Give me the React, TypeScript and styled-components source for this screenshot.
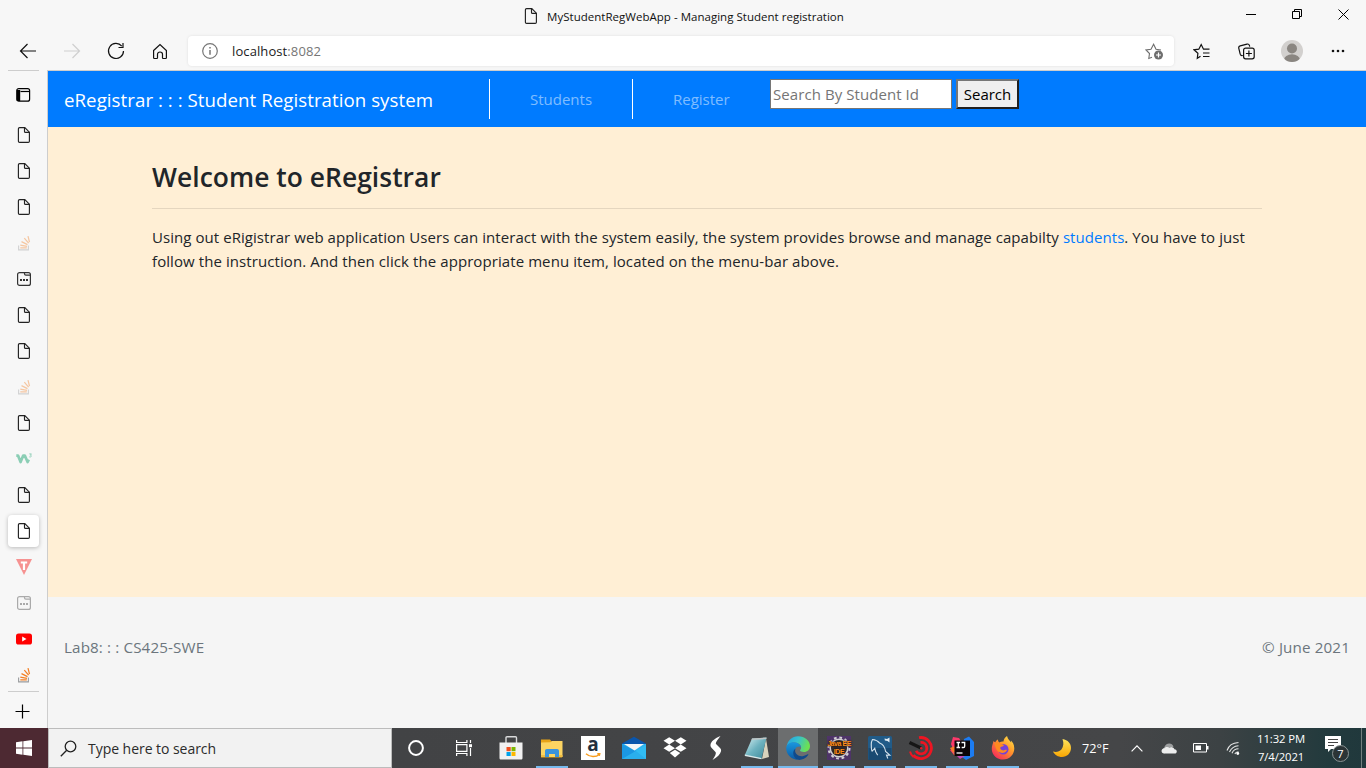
import React from "react";
import styled, { createGlobalStyle, css } from "styled-components";

const GlobalStyle = createGlobalStyle`
  *, *::before, *::after { box-sizing: border-box; }
  html, body { margin: 0; padding: 0; }
  body { font-family: "Open Sans", "Noto Sans", sans-serif; overflow: hidden; }
  svg { display: block; flex: none; }
`;

const Screen = styled.div`
  width: 1366px;
  height: 768px;
  display: flex;
  flex-direction: column;
  background: #f7f7f7;
`;

/* ---------- browser frame ---------- */
const TitleBar = styled.div`
  height: 34px;
  display: grid;
  grid-template-columns: 1fr auto 1fr;
  align-items: start;
`;
const WindowTitle = styled.div`
  grid-column: 2;
  display: flex;
  align-items: center;
  gap: 8px;
  height: 32px;
  padding-left: 1px;
  font-size: 11.5px;
  letter-spacing: 0.02px;
  color: #111;
`;
const WindowButtons = styled.div`
  display: flex;
  justify-content: flex-end;
  height: 28px;
`;
const WindowButton = styled.div`
  width: 46px;
  display: grid;
  place-items: center;
`;
const AddressRow = styled.div`
  height: 36px;
  display: flex;
  align-items: center;
  padding-bottom: 2px;
`;
const NavButton = styled.div<{ $w?: number }>`
  width: ${(p) => p.$w ?? 44}px;
  height: 32px;
  flex: none;
  display: grid;
  place-items: center;
`;
const NavGroup = styled.div<{ $left: number; $width: number }>`
  display: flex;
  width: ${(p) => p.$width}px;
  padding-left: ${(p) => p.$left}px;
`;
const AddressBox = styled.div`
  width: 986px;
  height: 30px;
  display: flex;
  align-items: center;
  padding: 0 10px 0 14px;
  background: #fff;
  border-radius: 4px;
  box-shadow: 0 0 3px rgba(0, 0, 0, 0.1);
`;
const Url = styled.div`
  flex: 1;
  margin-left: 14px;
  font-size: 13px;
  letter-spacing: 0.1px;
  color: #1b1b1b;
`;
const Port = styled.span`
  color: #767676;
`;

const Middle = styled.div`
  height: 658px;
  display: flex;
`;
const Sidebar = styled.div`
  width: 48px;
  height: 658px;
  display: flex;
  flex-direction: column;
  padding-left: 8px;
  border-right: 1px solid #cdcdcd;
  background: #f7f7f7;
`;
const SideRule = styled.div`
  width: 31px;
  height: 1px;
  background: #cdcdcd;
`;
const SideHeader = styled.div`
  height: 46px;
  display: flex;
  align-items: center;
  padding: 2px 0 0 8px;
`;
const TabList = styled.div`
  height: 574px;
  display: flex;
  flex-direction: column;
  gap: 4px;
  padding-top: 2px;
`;
const TabSlot = styled.div<{ $active?: boolean; $faded?: boolean }>`
  width: 31px;
  height: 32px;
  flex: none;
  display: flex;
  align-items: center;
  padding-left: 8px;
  border-radius: 4px;
  svg { opacity: ${(p) => (p.$faded ? 0.4 : 1)}; }
  ${(p) =>
    p.$active &&
    css`
      background: #fff;
      box-shadow: 0 1px 4px rgba(0, 0, 0, 0.25);
    `}
`;
const NewTab = styled.div`
  flex: 1;
  display: flex;
  align-items: center;
  padding: 3px 0 0 7px;
`;

/* ---------- page ---------- */
const Page = styled.div`
  flex: 1;
  display: flex;
  flex-direction: column;
  border-top: 1px solid #cdcdcd;
`;
const Navbar = styled.nav`
  height: 56px;
  display: flex;
  padding: 8px 16px;
  background: #007bff;
`;
const Brand = styled.div`
  width: 425px;
  line-height: 42px;
  font-size: 18.7px;
  letter-spacing: 0.045px;
  color: #fff;
  white-space: nowrap;
`;
const NavItem = styled.a<{ $w: number }>`
  width: ${(p) => p.$w}px;
  height: 40px;
  padding-left: 40px;
  border-left: 1px solid #fff;
  line-height: 40px;
  font-size: 15px;
  color: rgba(255, 255, 255, 0.5);
`;
const SearchForm = styled.div`
  display: flex;
  gap: 4px;
`;
const SearchInput = styled.input`
  width: 182px;
  height: 30px;
  padding: 1px 2px;
  border: 1px solid #767676;
  background: #fff;
  font: 15px "Open Sans", "Noto Sans", sans-serif;
  letter-spacing: 0.07px;
  outline: 0;
  &::placeholder { color: #757575; opacity: 1; }
`;
const SearchButton = styled.button`
  width: 63px;
  height: 30px;
  padding: 0;
  border: 2px solid;
  border-color: #767676 #212121 #212121 #767676;
  background: #efefef;
  font: 15px "Open Sans", "Noto Sans", sans-serif;
  color: #000;
`;
const Content = styled.main`
  height: 470px;
  padding: 32px 104px 0;
  background: #ffefd5;
`;
const Heading = styled.h3`
  margin: 0;
  line-height: 36px;
  font-size: 26.4px;
  font-weight: 600;
  letter-spacing: 0.04px;
  color: #212529;
`;
const Rule = styled.div`
  height: 1px;
  margin: 13px 0 16px;
  background: rgba(0, 0, 0, 0.1);
`;
const Paragraph = styled.p`
  margin: 0;
  line-height: 24px;
  font-size: 15px;
  color: #212529;
  white-space: nowrap;
`;
const Line = styled.span<{ $track: number }>`
  display: block;
  letter-spacing: ${(p) => p.$track}px;
`;
const Link = styled.a`
  color: #007bff;
`;
const Footer = styled.footer`
  flex: 1;
  display: flex;
  justify-content: space-between;
  padding: 38px 16px 0;
  line-height: 24px;
  font-size: 15.2px;
  letter-spacing: 0.13px;
  background: #f5f5f5;
  color: #6c757d;
`;

/* ---------- taskbar ---------- */
const Taskbar = styled.div`
  height: 40px;
  display: flex;
  background: linear-gradient(90deg, #4d2932 0, #4d2932 48px, #424345 392px, #454648 1120px, #3c4244 1220px, #223a3d 1330px, #20383c 1366px);
  color: #fff;
`;
const TaskCell = styled.div<{ $w: number }>`
  width: ${(p) => p.$w}px;
  flex: none;
  display: grid;
  place-items: center;
`;
const SearchBox = styled.div`
  width: 344px;
  display: flex;
  align-items: center;
  gap: 11px;
  padding-left: 11px;
  border: 1px solid #bcbcbc;
  background: #f2f2f2;
  font-size: 14px;
  letter-spacing: -0.04px;
  color: #2b2b2b;
`;
const Apps = styled.div`
  display: flex;
  gap: 1px;
  margin-left: 4px;
  width: 552px;
`;
const AppCell = styled.div<{ $open?: boolean; $active?: boolean }>`
  width: 40px;
  flex: none;
  display: flex;
  flex-direction: column;
  align-items: center;
  justify-content: space-between;
  padding-top: 8px;
  background: ${(p) => (p.$active ? "#6c6e6f" : "transparent")};
  &::after {
    content: "";
    width: ${(p) => (p.$active ? 40 : 32)}px;
    height: 2px;
    background: ${(p) => (p.$open || p.$active ? "#76b9ed" : "transparent")};
  }
`;
const Tray = styled.div`
  flex: 1;
  display: flex;
  align-items: center;
  padding-left: 9px;
`;
const Temp = styled.div`
  width: 39px;
  margin-left: 10px;
  font-size: 12.7px;
`;
const Clock = styled.div`
  width: 64px;
  display: flex;
  flex-direction: column;
  align-items: center;
  line-height: 18px;
  font-size: 11.3px;
  letter-spacing: -0.1px;
  padding-bottom: 1px;
`;
const ShowDesktop = styled.div`
  width: 5px;
  height: 40px;
  margin-left: auto;
  border-left: 1px solid #71807f;
`;

/* ---------- icons ---------- */
const Doc = () => (
  <svg width="16" height="16" viewBox="0 0 16 16" fill="none" stroke="#222" strokeWidth="1.15">
    <path d="M3.600.6h5.200l4.600 4.600v9c0 .7-.5 1.200-1.200 1.200H3.600c-.7 0-1.200-.5-1.200-1.200V1.800C2.400 1.100 2.900.6 3.600.6z" />
    <path d="M8.500.8v3.600c0 .6.400 1 1 1h3.700" />
  </svg>
);
const Stack = () => (
  <svg width="16" height="16" viewBox="0 0 16 16" fill="none">
    <path d="M2.600 10.500v4.400h9.800v-4.400" stroke="#9a9c9e" strokeWidth="1.100" />
    <path d="M4.300 12.900h6.500M4.300 10.100l6.700 1.300M5.500 6.600l6 3M8.300 3.200l4.300 5M12 1.200l1.500 6" stroke="#f48024" strokeWidth="1.250" />
  </svg>
);
const Dots = ({ color = "#333" }: { color?: string }) => (
  <svg width="16" height="16" viewBox="0 0 16 16" fill="none" stroke={color} strokeWidth="1.200">
    <rect x="1.600" y="1.600" width="12.800" height="12.800" rx="2" />
    <path d="M8.500 1.700v1.100c0 .8.600 1.400 1.400 1.400h4.600" />
    <path d="M4 9h2M7 9h2M10 9h2" strokeWidth="2" />
  </svg>
);
const W3 = () => (
  <svg width="16" height="16" viewBox="0 0 16 16" fill="none" stroke="#8bceb5">
    <path d="M.3 4.600H2L4.600 11 7.200 4.600h1.600L11.600 11l1.200-2.400" strokeWidth="2.700" strokeLinejoin="round" />
    <path d="M13.300 2.900h2.100l-1 1.300c1.500 0 1.400 2.300-1.100 1.700" strokeWidth=".9" />
  </svg>
);
const TIcon = () => (
  <svg width="16" height="16" viewBox="0 0 16 16">
    <path d="M0 0h16L8 16z" fill="#f69291" />
    <path d="M4.800 2.500h6.400v2H9.100V11H6.900V4.500H4.800z" fill="#fff" />
  </svg>
);
const YouTube = () => (
  <svg width="16" height="16" viewBox="0 0 16 16">
    <rect y="2.400" width="16" height="11.200" rx="2.600" fill="#f00" />
    <path d="M6.200 5.600v4.800L10.500 8z" fill="#fff" />
  </svg>
);

const sideTabs: { icon: React.ReactNode; active?: boolean; faded?: boolean }[] = [
  { icon: <Doc /> },
  { icon: <Doc /> },
  { icon: <Doc /> },
  { icon: <Stack />, faded: true },
  { icon: <Dots /> },
  { icon: <Doc /> },
  { icon: <Doc /> },
  { icon: <Stack />, faded: true },
  { icon: <Doc /> },
  { icon: <W3 /> },
  { icon: <Doc /> },
  { icon: <Doc />, active: true },
  { icon: <TIcon /> },
  { icon: <Dots color="#aaa" /> },
  { icon: <YouTube /> },
  { icon: <Stack /> },
];

const Store = () => (
  <svg width="24" height="24" viewBox="0 0 24 24">
    <path d="M7 8V1.800c0-.6.400-1 1-1h8.500c.6 0 1 .4 1 1V8" fill="none" stroke="#d9dadb" strokeWidth="1.400" />
    <path d="M.5 6.500h23V22c0 1-.6 1.600-1.500 1.600H2C1 23.600.5 23 .5 22z" fill="#f1f1f1" />
    <path d="M7.500 11h4.200v4.200H7.500z" fill="#f04e1f" /><path d="M12.500 11h4v4.200h-4z" fill="#7db700" />
    <path d="M7.500 16h4.200v4H7.500z" fill="#00a2ea" /><path d="M12.500 16h4v4h-4z" fill="#fdb800" />
  </svg>
);
const Explorer = () => (
  <svg width="24" height="24" viewBox="0 0 24 24">
    <path d="M1 3.500h9l1.500 2H22v16H1z" fill="#e8a317" />
    <path d="M1 6.500l9.500-.2L12 5h10.500v16H1z" fill="#fcd462" />
    <path d="M5 21v-6c0-1.300.7-2 2-2h10c1.300 0 2 .7 2 2v6h-4v-3H9v3z" fill="#3a93dd" />
    <path d="M1 19h4v2H1zm18 0h3.500v2H19z" fill="#f2bd42" />
  </svg>
);
const AmazonGlyph = styled.div`
  width: 24px;
  height: 24px;
  display: flex;
  flex-direction: column;
  align-items: center;
  background: #fff;
  color: #222f3e;
  font: bold 19px/17px "Open Sans", sans-serif;
`;
const Mail = () => (
  <svg width="24" height="24" viewBox="0 0 24 24">
    <path d="M0 7.500 12 .8 24 7.500V10H0z" fill="#0a56ad" />
    <path d="M0 8h24v15H0z" fill="#2cb4f0" />
    <path d="M0 8 14 15 24 23H0z" fill="#1b97e2" />
    <path d="M2 8h20l-9.500 6.500z" fill="#f4f5f7" />
    <path d="M24 9 0 23h24z" fill="#37c3f5" opacity=".55" />
  </svg>
);
const Dropbox = () => (
  <svg width="24" height="24" viewBox="0 0 24 24" fill="#fff">
    <path d="M6.200 1.200 12 4.800 6.200 8.400.5 4.800zM17.800 1.200l5.700 3.600-5.700 3.600L12 4.800zM6.200 8.600 12 12.200l-5.800 3.600L.5 12.200zM17.800 8.600l5.700 3.600-5.700 3.600L12 12.200zM12 13.800l5.200 3.300L12 21.400l-5.200-4.300z" />
  </svg>
);
const Bolt = () => (
  <svg width="24" height="24" viewBox="0 0 24 24" fill="#fff">
    <path d="M16.500 0C10 2.800 7 5.500 6.500 8.800c-.2 1.200.3 2.200 1.200 3.200l4 4.300c.6 2-.8 4.200-3.200 7.700 5-3 7.700-5.600 8.500-8.800.3-1.300 0-2.300-1-3.300l-4.200-4.200C11.700 5.800 13.800 3.500 16.500 0z" />
  </svg>
);
const Notepad = () => (
  <svg width="26" height="24" viewBox="0 0 26 24">
    <defs><linearGradient id="np" x1="0" y1="0" x2="1" y2="1"><stop offset="0" stopColor="#d8f0f2" /><stop offset=".5" stopColor="#6db2bf" /><stop offset="1" stopColor="#3b8798" /></linearGradient></defs>
    <path d="M22 2.500l3 18.500-7 2z" fill="#d9d3bd" />
    <path d="M8 2.500 22.500 1.500 17.500 23 .8 19z" fill="url(#np)" />
    <path d="M8 2.500l14.500-1v1.500L7.500 4z" fill="#c0c4c5" />
    <path d="M.8 18.500 17.500 22v1.300L.8 20z" fill="#dbe9ea" />
  </svg>
);
const Edge = () => (
  <svg width="24" height="24" viewBox="0 0 24 24">
    <defs>
      <linearGradient id="e1" x1="0" y1="0" x2="1" y2=".3"><stop offset="0" stopColor="#249fdc" /><stop offset=".5" stopColor="#35c1d0" /><stop offset="1" stopColor="#6be054" /></linearGradient>
      <linearGradient id="e2" x1="0" y1="0" x2="0" y2="1"><stop offset="0" stopColor="#1a98df" /><stop offset="1" stopColor="#0c59a4" /></linearGradient>
    </defs>
    <path d="M.5 11C1.500 4.500 6 .2 12 .2c7 0 12 4.600 12 9.800 0 3.700-2.700 6-6 6-2.500 0-4-.8-4-1.700 0-.7 1.100-1 1.100-2.900C15 8 10 6 6 6.800 3 7.400 1 9 .5 11z" fill="url(#e1)" />
    <path d="M.2 12C.4 8.500 4 5.800 8 6.200c4 .4 6.600 2.600 7 5-1-1.200-4.500-1-5.600 1.600C7.600 17 11 23.800 12 23.800 5.500 23.800 0 18.500.2 12z" fill="url(#e2)" />
    <path d="M9.400 12.800c-1.500 4.700 3 8.200 7.200 7.400 2-.3 4-1.400 5-1.900.6-.3 1 .2.600.8C19.500 23 15 24.300 12 23.800 6.500 21.800 6 15 9.400 12.800z" fill="#114a8b" />
  </svg>
);
const EclipseTile = styled.div`
  width: 24px;
  height: 24px;
  display: grid;
  grid-template-columns: 24px;
  background: #4e3468;
  svg, div { grid-area: 1 / 1; }
`;
const EclipseLabel = styled.div`
  z-index: 1;
  display: flex;
  flex-direction: column;
  align-items: center;
  padding-top: 4px;
  font: bold 7px/8px "Liberation Sans", sans-serif;
  letter-spacing: -0.45px;
  color: #ff8f1f;
  text-shadow: 0 0 1px #2a1509, 0 0 1px #2a1509, 0 0 2px #2a1509;
  white-space: nowrap;
`;
const Gear = () => (
  <svg width="24" height="24" viewBox="0 0 24 24">
    <circle cx="12" cy="12" r="8.800" fill="#322b2f" stroke="#d3d1d4" strokeWidth="1.500" />
    <circle cx="12" cy="12" r="10.500" fill="none" stroke="#d3d1d4" strokeWidth="2" strokeDasharray="2.750 2.750" />
  </svg>
);
const MySql = () => (
  <svg width="24" height="24" viewBox="0 0 24 24">
    <rect width="24" height="24" rx="1.500" fill="#215b88" />
    <path d="M.5 12h23v12H.5z" fill="#194a72" />
    <path d="M4 15.500C2.800 10 3 6 4.500 3.500c3 .2 5.500 1.600 7.500 3.800 3.500 1 5 5.200 5.600 8.200l4.200 3.700-3.300-.2 1.300 3.500M4 15.500l2.700-3.300c.4 2.600 1.400 5 3 7" fill="none" stroke="#d5e2ec" strokeWidth="1.100" />
    <path d="M16.500 2.500 19 3l2.500-1.500v5L19.500 5l-2.600-.6z" fill="#e2ecf3" />
  </svg>
);
const Radar = () => (
  <svg width="26" height="24" viewBox="0 0 26 24" fill="none" stroke="#ee1522" strokeWidth="2.800">
    <path d="M11 1.700A10.500 10.500 0 1 1 5.200 19.200" />
    <path d="M12.500 6.500a5.700 5.700 0 1 1-4.400 8.400" />
    <path d="M1.500 6.500 13 12" stroke="#161616" strokeWidth="3.200" />
    <circle cx="13.200" cy="12.200" r="1.200" fill="#ee1522" stroke="none" />
    <path d="M2 15.500c.6 2.500 1.800 4.200 3.500 5.500" strokeWidth="2" />
  </svg>
);
const IntelliJ = () => (
  <svg width="24" height="24" viewBox="0 0 24 24">
    <path d="M1 8 3 1l6 1 3 5-8 12-4-5 3-1z" fill="#fc3a6b" />
    <path d="M0 12l5-2v10z" fill="#f97b2b" />
    <path d="M14 3l5-2.500L24 6v14l-8 4-4-3z" fill="#1c7cf2" />
    <path d="M3 16l7 7 5-3z" fill="#c744b4" />
    <path d="M4.500 4.500h15.500v15.500H4.500z" fill="#0b0508" />
    <path d="M6.500 6.500h3.600M8.300 6.500v5M6.500 11.500h3.600M11.500 6.500h3.200v3.700c0 .9-.4 1.300-1.300 1.300h-1.700" fill="none" stroke="#fff" strokeWidth="1.300" />
    <path d="M6.500 17h6" stroke="#fff" strokeWidth="1.300" />
  </svg>
);
const Firefox = () => (
  <svg width="24" height="24" viewBox="0 0 24 24">
    <defs><linearGradient id="ff" x1="1" y1="0" x2=".2" y2="1"><stop offset="0" stopColor="#fff04f" /><stop offset=".45" stopColor="#ff9a2a" /><stop offset="1" stopColor="#f5265c" /></linearGradient></defs>
    <path d="M2.500 5C2 8 .6 10 .8 13.500 1.200 19.500 6 23.600 12 23.600c6.500 0 11.200-4.800 11.300-11 0-4.300-2-6.800-3.400-8l.3 2C18.500 4 17 3.500 16 0c-2.300 1.500-3.300 3.600-3.500 5.500-2 0-3 .3-4 .9C7 6 7 4.500 7 3.600 5.500 4.200 4.800 5.300 4.300 6.200 3.500 6 3 5.600 2.500 5z" fill="url(#ff)" />
    <circle cx="12.300" cy="13.200" r="5.200" fill="#7542d8" />
    <path d="M3.500 7.500c2.500-1.500 4.500-.8 5.500 0l4 1.600c-.5 1.500-2.700 1.500-3.500 2.200-.7 1 .2 2.600 2 3 1.800.5 3-1 4.500-.4-1 2.600-5 4-8 2.200C5 14.500 4.500 11 3.500 7.500z" fill="#ff8a1f" />
  </svg>
);

const apps: { icon: React.ReactNode; open?: boolean; active?: boolean }[] = [
  { icon: <Store /> },
  { icon: <Explorer />, open: true },
  {
    icon: (
      <AmazonGlyph>
        a
        <svg width="16" height="5" viewBox="0 0 16 5" fill="none" stroke="#f79c1d" strokeWidth="1.400"><path d="M1 .8c4 3.600 10 3.600 13.500.4M12.300.8l2.500-.2-.5 2.300" /></svg>
      </AmazonGlyph>
    ),
  },
  { icon: <Mail /> },
  { icon: <Dropbox /> },
  { icon: <Bolt /> },
  { icon: <Notepad />, open: true },
  { icon: <Edge />, active: true },
  {
    icon: (
      <EclipseTile>
        <Gear />
        <EclipseLabel><span>Java EE</span><span>IDE</span></EclipseLabel>
      </EclipseTile>
    ),
    open: true,
  },
  { icon: <MySql />, open: true },
  { icon: <Radar />, open: true },
  { icon: <IntelliJ />, open: true },
  { icon: <Firefox />, open: true },
];

const Notice = styled.div`
  position: relative;
  width: 24px;
  height: 24px;
  margin-left: 12px;
`;
const Badge = styled.div`
  position: absolute;
  left: 7px;
  top: 9px;
  width: 17px;
  height: 17px;
  border: 1px solid #8b9495;
  border-radius: 50%;
  background: #2b3436;
  text-align: center;
  font-size: 11px;
  line-height: 15px;
`;

function BrowserTop() {
  return (
    <>
      <TitleBar>
        <WindowTitle>
          <Doc />
          MyStudentRegWebApp - Managing Student registration
        </WindowTitle>
        <WindowButtons>
          <WindowButton><svg width="10" height="10"><path d="M0 5.500h10" stroke="#000" /></svg></WindowButton>
          <WindowButton><svg width="10" height="10" fill="none" stroke="#000"><path d="M.5 2.500h7v7h-7zM2.500 2.500v-2h7v7h-2" /></svg></WindowButton>
          <WindowButton><svg width="11" height="11" stroke="#000"><path d="M.5.5l10 10M10.500.5l-10 10" /></svg></WindowButton>
        </WindowButtons>
      </TitleBar>
      <AddressRow>
        <NavGroup $left={6} $width={188}>
          <NavButton><svg width="18" height="16" fill="none" stroke="#111" strokeWidth="1.200"><path d="M17 8H1.500M8.500 1l-7 7 7 7" /></svg></NavButton>
          <NavButton><svg width="18" height="16" fill="none" stroke="#cfcfcf" strokeWidth="1.200"><path d="M1 8h15.500M9.500 1l7 7-7 7" /></svg></NavButton>
          <NavButton><svg width="18" height="18" fill="none" stroke="#111" strokeWidth="1.200"><path d="M14.800 4.200A7.500 7.500 0 1 0 16.500 9M16 1v4.500h-4.500" /></svg></NavButton>
          <NavButton><svg width="16" height="17" fill="none" stroke="#111" strokeWidth="1.200"><path d="M1.600 7.500 8 1.500l6.400 6v7.200c0 .5-.3.800-.8.800h-2.400c-.4 0-.7-.3-.7-.8v-3.500c0-1.300-1-2.200-2.500-2.200s-2.500.9-2.500 2.200v3.500c0 .5-.3.800-.7.800H2.400c-.5 0-.8-.3-.8-.8z" /></svg></NavButton>
        </NavGroup>
        <AddressBox>
          <svg width="16" height="16" fill="none" stroke="#767676" strokeWidth="1.200"><circle cx="8" cy="8" r="7.300" /><path d="M8 7v4.800M8 4v1.500" strokeWidth="1.500" /></svg>
          <Url>localhost<Port>:8082</Port></Url>
          <svg width="19" height="18" viewBox="0 0 19 18">
            <path d="M7 15.200 3.800 16.500l.7-5L1 8l5-.8L8.600 2.300 11 7.200l5 .8" fill="none" stroke="#6e6e6e" strokeWidth="1.100" />
            <circle cx="13.500" cy="13" r="4.500" fill="#6e6e6e" />
            <path d="M11 13h5M13.500 10.500v5" stroke="#fff" strokeWidth="1.200" />
          </svg>
        </AddressBox>
        <NavGroup $left={6} $width={192}>
          <NavButton>
            <svg width="18" height="17" viewBox="0 0 18 17" fill="none" stroke="#111" strokeWidth="1.200"><path d="M7.500 13.200 4.300 15.300l.6-5L1 6.800l4.800-.6 2.400-4.700 2.300 4.700h6M10 10h6.500M10 13.500h6.500" /></svg>
          </NavButton>
          <NavButton>
            <svg width="17" height="17" viewBox="0 0 17 17" fill="none" stroke="#111" strokeWidth="1.200"><path d="M4.800 12.500c-1.700.4-2.300-.3-2.600-1.300L.8 5.300C.5 4 1 3.200 2.200 2.900L9 1.100c1.200-.3 2 .1 2.400 1.300l.3 1.200" /><rect x="5.600" y="5.200" width="10.600" height="10.600" rx="2" /><path d="M10.900 7.500v6M7.900 10.500h6" /></svg>
          </NavButton>
          <NavButton $w={48}>
            <svg width="22" height="22"><defs><clipPath id="av"><circle cx="11" cy="11" r="11" /></clipPath></defs><g clipPath="url(#av)"><path d="M0 0h22v22H0z" fill="#d2d0ce" /><circle cx="11" cy="8.500" r="5" fill="#8a8681" /><ellipse cx="11" cy="20" rx="8" ry="5.700" fill="#8a8681" /></g></svg>
          </NavButton>
          <NavButton><svg width="14" height="4" fill="#111"><circle cx="2" cy="2" r="1.300" /><circle cx="7" cy="2" r="1.300" /><circle cx="12" cy="2" r="1.300" /></svg></NavButton>
        </NavGroup>
      </AddressRow>
    </>
  );
}

function SideTabs() {
  return (
    <Sidebar>
      <SideRule />
      <SideHeader>
        <svg width="16" height="16" viewBox="0 0 16 16" fill="none" stroke="#000" strokeWidth="1.200"><rect x=".8" y="1.600" width="12.800" height="12.600" rx="2" /><path d="M4.500 4.500h9" /><path d="M.8 3h3.400v11H.8z" fill="#000" stroke="none" /></svg>
      </SideHeader>
      <TabList>
        {sideTabs.map((t, i) => (
          <TabSlot key={i} $active={t.active} $faded={t.faded}>{t.icon}</TabSlot>
        ))}
      </TabList>
      <SideRule />
      <NewTab><svg width="15" height="15" stroke="#000" strokeWidth="1.200"><path d="M7.500.5v14M.5 7.500h14" /></svg></NewTab>
    </Sidebar>
  );
}

function WindowsTaskbar() {
  return (
    <Taskbar>
      <TaskCell $w={48}>
        <svg width="16" height="16" fill="#fff"><path d="M0 2.200 6.500 1.300v6.200H0zM7.300 1.200 16 0v7.500H7.300zM0 8.400h6.500v6.300L0 13.800zM7.300 8.400H16V16l-8.700-1.200z" /></svg>
      </TaskCell>
      <SearchBox>
        <svg width="17" height="17" fill="none" stroke="#222" strokeWidth="1.300"><circle cx="10.500" cy="6.500" r="5.300" /><path d="M6.700 10.300.8 16.200" /></svg>
        Type here to search
      </SearchBox>
      <TaskCell $w={48}><svg width="16" height="16" fill="none" stroke="#fff" strokeWidth="2"><circle cx="8" cy="8" r="6.900" /></svg></TaskCell>
      <TaskCell $w={47}><svg width="16" height="16" fill="none" stroke="#fff" strokeWidth="1.200"><path d="M.6 0v2.500h10.300V0M.6 16v-2.500h10.300V16M.6 4.700h10.300v6.600H.6zM14.500 0v3M14.500 8v8" /><path d="M13 4.200h3v3h-3z" fill="#fff" stroke="none" /></svg></TaskCell>
      <Apps>
        {apps.map((a, i) => (
          <AppCell key={i} $open={a.open} $active={a.active}>{a.icon}</AppCell>
        ))}
      </Apps>
      <Tray>
        <svg width="20" height="20" viewBox="0 0 20 20"><defs><linearGradient id="mn" x1="0" y1="0" x2="0" y2="1"><stop offset="0" stopColor="#ffe45c" /><stop offset="1" stopColor="#f9a602" /></linearGradient></defs><path d="M10.500 1C16 2 19 5.500 19 10c0 5-4 9-9 9-4 0-7.300-2.200-9-5.500 3 1 6.300.3 8.400-2C11.500 9 12 5 10.500 1z" fill="url(#mn)" /></svg>
        <Temp>72°F</Temp>
        <TaskCell $w={32}><svg width="12" height="7" fill="none" stroke="#fff" strokeWidth="1.200"><path d="M.6 6.300 6 .9l5.400 5.400" /></svg></TaskCell>
        <TaskCell $w={32}><svg width="16" height="11"><path d="M3 10.500a3 3 0 0 1 0-5.500C4 2 6 .6 8.300.6c2 0 3.400 1 4.200 3L6 9z" fill="#9c9e9f" /><path d="M3.300 10.500c-3.700-.3-3.700-4.800.2-5.200 1-1.500 3.700-1.600 5-.2 1.300-1.700 4.600-1 4.900 1.200 3.300.2 3 4.200.2 4.200z" fill="#eceded" /></svg></TaskCell>
        <TaskCell $w={32}><svg width="16" height="10"><path d="M.5.500h13v8.500H.5z" fill="none" stroke="#fff" /><path d="M2.500 2.500h5.500v4.500H2.500zM14 3h1.500v3.500H14z" fill="#fff" /></svg></TaskCell>
        <TaskCell $w={32}><svg width="14" height="14" fill="none" stroke="#e5e6e6" strokeWidth="1.100"><path d="M1 9.500C2.500 5 6.500 1.800 12.500 1.500M3.500 11C5 7.500 8 5 12.500 4.700M6 12.200c1-2.400 3.300-4.300 6.500-4.400M8.800 13c.6-1.300 1.800-2.200 3.700-2.300" /><circle cx="11.800" cy="12.500" r="1.400" fill="#fff" stroke="none" /></svg></TaskCell>
        <Clock><span>11:32 PM</span><span>7/4/2021</span></Clock>
        <Notice>
          <svg width="17" height="17"><path d="M0 0h16v13H6l-3 3v-3H0z" fill="#fff" /><path d="M3 3.500h10M3 6.500h10M3 9.500h6" stroke="#444" /></svg>
          <Badge>7</Badge>
        </Notice>
        <ShowDesktop />
      </Tray>
    </Taskbar>
  );
}

export default function App() {
  return (
    <>
      <GlobalStyle />
      <Screen>
        <BrowserTop />
        <Middle>
          <SideTabs />
          <Page>
            <Navbar>
              <Brand>eRegistrar : : : Student Registration system</Brand>
              <NavItem $w={143}>Students</NavItem>
              <NavItem $w={138}>Register</NavItem>
              <SearchForm>
                <SearchInput placeholder="Search By Student Id" />
                <SearchButton>Search</SearchButton>
              </SearchForm>
            </Navbar>
            <Content>
              <Heading>Welcome to eRegistrar</Heading>
              <Rule />
              <Paragraph>
                <Line $track={0.06}>
                  Using out eRigistrar web application Users can interact with the system easily, the system provides browse and manage capabilty <Link>students</Link>. You have to just
                </Line>
                <Line $track={0.083}>follow the instruction. And then click the appropriate menu item, located on the menu-bar above.</Line>
              </Paragraph>
            </Content>
            <Footer><span>Lab8: : : CS425-SWE</span><span>© June 2021</span></Footer>
          </Page>
        </Middle>
        <WindowsTaskbar />
      </Screen>
    </>
  );
}
